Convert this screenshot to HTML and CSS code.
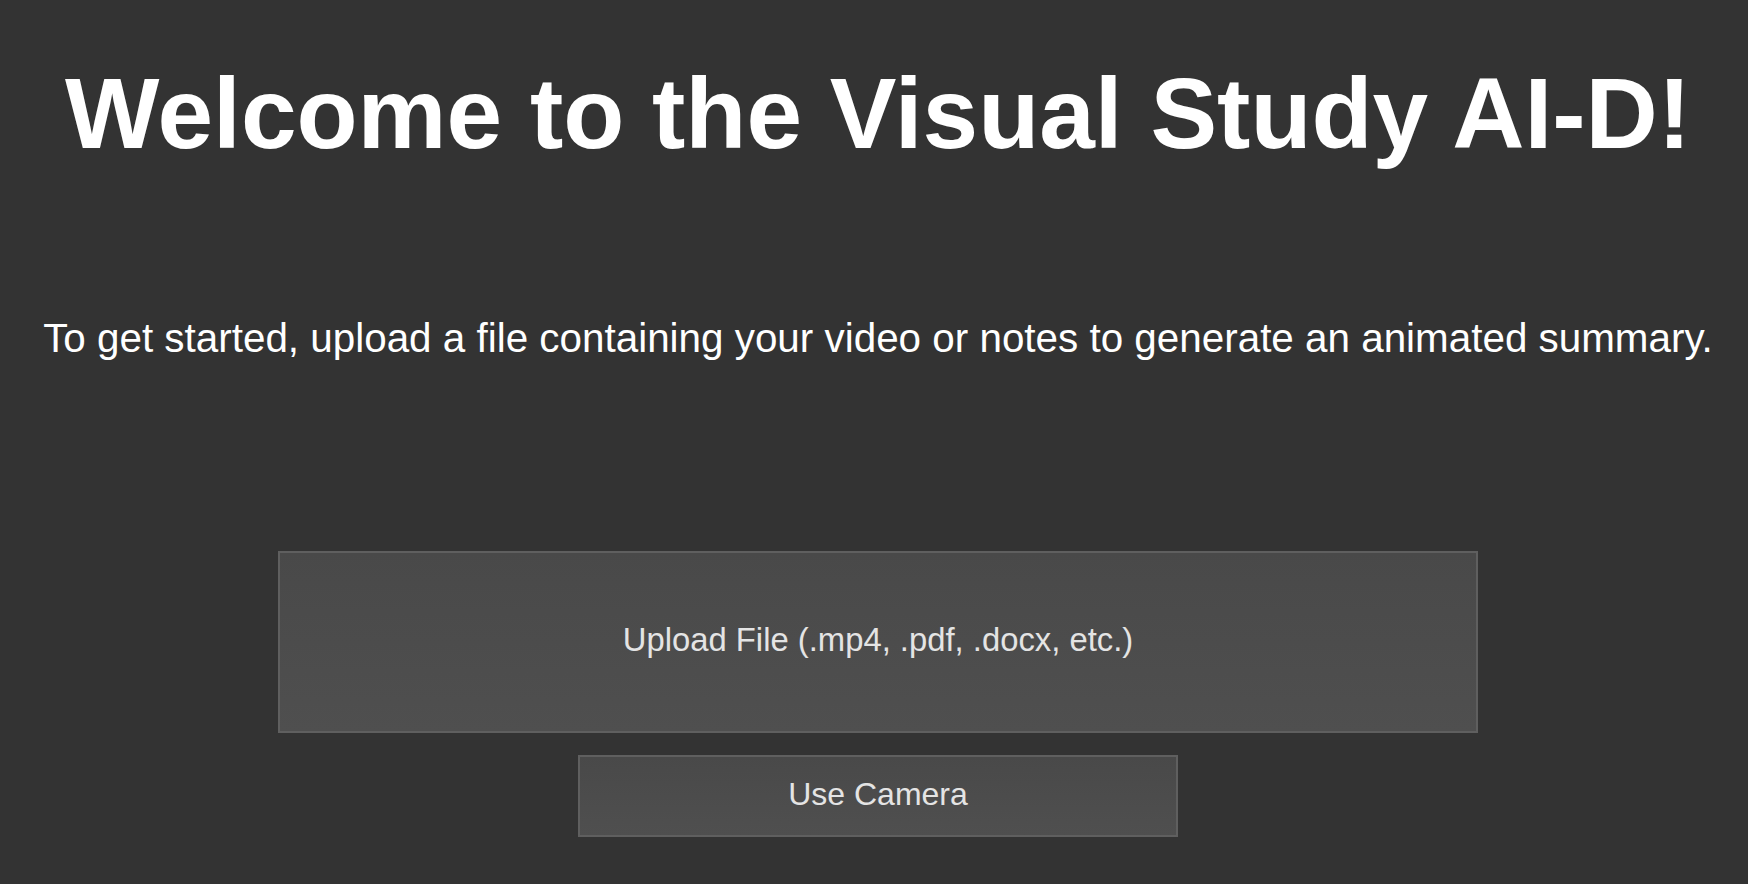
FILE: index.html
```html
<!DOCTYPE html>
<html lang="en">
<head>
<meta charset="utf-8">
<title>Visual Study AI-D</title>
<link rel="stylesheet" href="styles.css">
</head>
<body>
<main class="page">
  <h1 class="title">Welcome to the Visual Study AI-D!</h1>
  <p class="intro">To get started, upload a file containing your video or notes to generate an animated summary.</p>
  <div class="actions">
    <button class="btn btn-upload" type="button">Upload File (.mp4, .pdf, .docx, etc.)</button>
    <button class="btn btn-camera" type="button">Use Camera</button>
  </div>
</main>
</body>
</html>
```

FILE: styles.css
```css
html, body {
  margin: 0;
  padding: 0;
  background: #333333;
}

body {
  font-family: "Liberation Sans", Arial, Helvetica, sans-serif;
  color: #ffffff;
  height: 884px;
  overflow: hidden;
}

.page {
  display: flex;
  flex-direction: column;
  align-items: center;
  padding-left: 8px;
}

.title {
  margin: 56px 0 0;
  font-size: 100px;
  line-height: 1.15;
  font-weight: 700;
  color: #ffffff;
  white-space: nowrap;
}

.intro {
  margin: 144px 0 0;
  font-size: 40.4px;
  line-height: 1.15;
  font-weight: 400;
  color: #ffffff;
  white-space: nowrap;
}

.actions {
  margin-top: 190px;
  align-self: stretch;
  display: flex;
  flex-direction: column;
  align-items: center;
  gap: 22px;
}

.btn {
  display: flex;
  align-items: center;
  justify-content: center;
  box-sizing: border-box;
  border: 2px solid #5f5f5f;
  background: linear-gradient(#494949, #4f4f4f);
  color: #e4e4e4;
  font-family: "Liberation Sans", Arial, Helvetica, sans-serif;
  font-size: 32.8px;
  padding: 0 0 4px;
  margin: 0;
  border-radius: 0;
}

.btn-upload {
  width: 1200px;
  height: 182px;
}

.btn-camera {
  width: 600px;
  height: 82px;
  font-size: 32px;
}
```
